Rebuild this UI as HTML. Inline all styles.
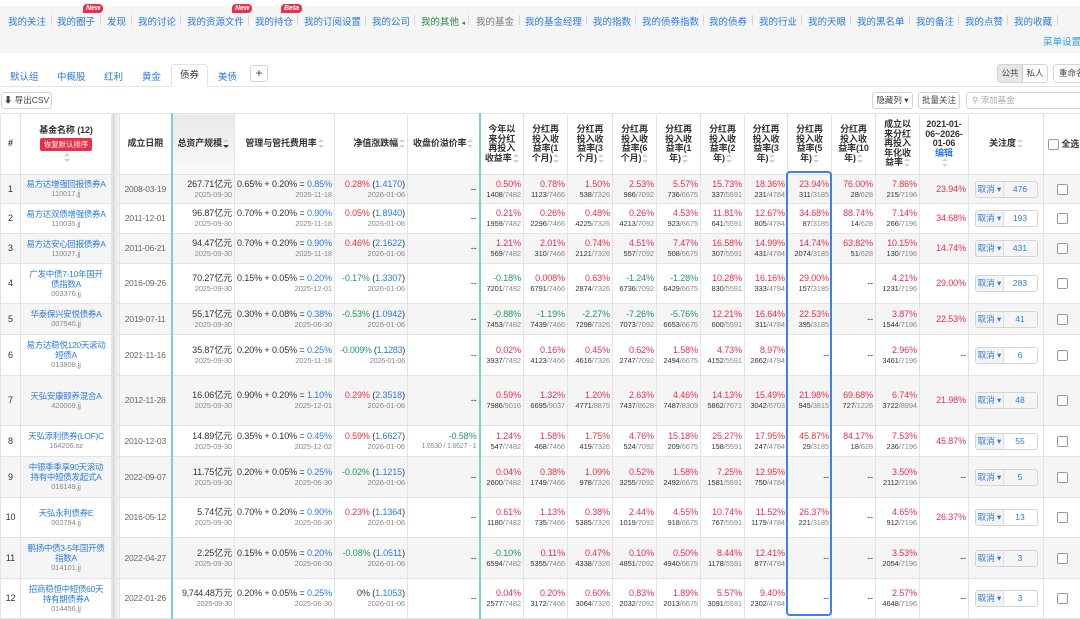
<!DOCTYPE html>
<html><head><meta charset="utf-8">
<style>
*{box-sizing:border-box;margin:0;padding:0}
body{width:1080px;height:617px;overflow:hidden;background:#fff;font-family:"Liberation Sans","Noto Sans CJK SC",sans-serif;color:#333;position:relative}
.nav{position:absolute;left:0;top:6px;width:1080px;height:47px;background:#f5f5f5}
.nav a{position:absolute;top:8px;font-size:9.5px;color:#2a7ae2;text-decoration:none;white-space:nowrap}
.nav .sep{position:absolute;top:9px;width:1px;height:10px;background:#d6d6d6}
.badge{position:absolute;top:-2px;font-size:7px;font-style:italic;font-weight:bold;color:#fff;background:#e8304a;border-radius:4px 4px 4px 0;padding:0 3px;line-height:9px}
.tab{position:absolute;top:69px;font-size:9.5px;color:#2a7ae2}
.tabline{position:absolute;left:0;top:86px;width:1080px;height:1px;background:#e3e3e3}
.btn{position:absolute;border:1px solid #d4d4d4;border-radius:3px;background:#fff;font-size:8.5px;color:#444;text-align:center;white-space:nowrap}
table{position:absolute;left:0;top:113px;border-collapse:collapse;table-layout:fixed;width:1080px}
td{border:1px solid #e3e3e3;font-size:9px;vertical-align:middle;overflow:hidden;white-space:nowrap;padding:0 2px;line-height:11px;letter-spacing:-0.1px}
tr.g td{background:#f5f5f5}
tr.h td{background:#fff;font-weight:bold;text-align:center;line-height:9.5px;font-size:9px;white-space:normal;color:#333}
td.gap{background:linear-gradient(to right,#cfcfcf,#e9e9e9 40%,#f7f7f7)!important;border-left:1px solid #ccc;padding:0}
td.tl{border-left:2px solid #7fcfcf}
td.c{text-align:center}
td.r{text-align:right}
td.dt{font-size:8.5px;color:#666;text-align:center;padding:0;letter-spacing:-0.2px}
td.n{padding:0 1px}
.nm{color:#2a7ae2;font-size:8.5px;line-height:10px;white-space:normal;text-align:center;letter-spacing:-0.3px}
.cd{color:#888;font-size:7.5px;line-height:10px;text-align:center}
.s{display:block;font-size:7.5px;color:#888;line-height:10px}
.s b{color:#333;font-weight:normal}
.v{display:block;line-height:11px}
.red{color:#e8304a}.grn{color:#1e9c5a}.blu{color:#2a7ae2}
.so{display:inline-block;width:6px;height:9px;position:relative;vertical-align:middle;margin-left:1px}
.so:before,.so:after{content:"";position:absolute;left:0;border-left:3px solid transparent;border-right:3px solid transparent}
.so:before{top:0;border-bottom:3.5px solid #d0d0d0}
.so:after{bottom:0;border-top:3.5px solid #d0d0d0}
.so.d:after{border-top-color:#333}
.fb{display:inline-block;width:63px;height:17px;border:1px solid #d4d4d4;border-radius:3px;font-size:8.5px;line-height:15px;vertical-align:middle;overflow:hidden;letter-spacing:0}
.fb span{display:inline-block;height:15px;text-align:center;vertical-align:top}
.fb .a{width:28px;background:#f3f3f3;color:#2a7ae2;border-right:1px solid #ddd}
.fb .b{width:32px;color:#2a7ae2}
.cb{display:inline-block;width:11px;height:11px;border:1px solid #999;border-radius:2px;background:#fff;vertical-align:middle}
.box{position:absolute;left:786px;top:171px;width:46px;height:445px;border:2.5px solid #3b82f0;border-radius:4px}
</style></head><body>
<div class="nav">
<a style="left:8px">我的关注</a><i class="sep" style="left:51px"></i>
<a style="left:57px">我的圈子<span class="badge" style="left:26px;top:-10px">New</span></a><i class="sep" style="left:100px"></i>
<a style="left:107px">发现</a><i class="sep" style="left:131px"></i>
<a style="left:138px">我的讨论</a><i class="sep" style="left:180px"></i>
<a style="left:187px">我的资源文件<span class="badge" style="left:45px;top:-10px">New</span></a><i class="sep" style="left:248px"></i>
<a style="left:255px">我的持仓<span class="badge" style="left:26px;top:-10px">Beta</span></a><i class="sep" style="left:297px"></i>
<a style="left:304px">我的订阅设置</a><i class="sep" style="left:365px"></i>
<a style="left:372px">我的公司</a><i class="sep" style="left:414px"></i>
<a style="left:421px;color:#2a8a4a">我的其他 <span style="font-size:7px">◂</span></a><i class="sep" style="left:468px"></i>
<a style="left:476px;color:#777">我的基金</a><i class="sep" style="left:519px"></i>
<a style="left:525px">我的基金经理</a><i class="sep" style="left:586px"></i>
<a style="left:593px">我的指数</a><i class="sep" style="left:635px"></i>
<a style="left:642px">我的债券指数</a><i class="sep" style="left:703px"></i>
<a style="left:709px">我的债券</a><i class="sep" style="left:752px"></i>
<a style="left:759px">我的行业</a><i class="sep" style="left:801px"></i>
<a style="left:808px">我的天眼</a><i class="sep" style="left:850px"></i>
<a style="left:857px">我的黑名单</a><i class="sep" style="left:909px"></i>
<a style="left:916px">我的备注</a><i class="sep" style="left:958px"></i>
<a style="left:965px">我的点赞</a><i class="sep" style="left:1007px"></i>
<a style="left:1014px">我的收藏</a><i class="sep" style="left:1057px"></i>
<a style="left:1043px;top:28px;color:#2aa0e0">菜单设置</a>
</div>
<div class="tabline"></div>
<span class="tab" style="left:10px">默认组</span>
<span class="tab" style="left:57px">中概股</span>
<span class="tab" style="left:104px">红利</span>
<span class="tab" style="left:142px">黄金</span>
<div style="position:absolute;left:171px;top:64px;width:37px;height:23px;border:1px solid #e3e3e3;border-bottom:1px solid #fff;background:#fff;border-radius:3px 3px 0 0;font-size:9.5px;color:#333;text-align:center;line-height:22px">债券</div>
<span class="tab" style="left:218px">美债</span>
<div class="btn" style="left:250px;top:65px;width:18px;height:17px;font-size:12px;line-height:14px">+</div>
<div class="btn" style="left:997px;top:64px;width:51px;height:19px;line-height:17px;padding:0"><span style="display:inline-block;width:25px;background:#e6e6e6;border-right:1px solid #ccc">公共</span><span style="display:inline-block;width:24px">私人</span></div>
<div class="btn" style="left:1053px;top:64px;width:40px;height:19px;line-height:17px;text-align:left;padding-left:5px">重命名</div>
<div class="btn" style="left:1px;top:92px;width:51px;height:17px;line-height:15px">⬇ 导出CSV</div>
<div class="btn" style="left:872px;top:92px;width:41px;height:17px;line-height:15px">隐藏列 ▾</div>
<div class="btn" style="left:918px;top:92px;width:42px;height:17px;line-height:15px">批量关注</div>
<div class="btn" style="left:966px;top:92px;width:120px;height:17px;line-height:15px;text-align:left;padding-left:5px;color:#aaa">&#9906; 添加基金</div>

<table>
<colgroup><col style="width:20px"><col style="width:91px"><col style="width:8px"><col style="width:52px"><col style="width:63px"><col style="width:100px"><col style="width:73px"><col style="width:72px"><col style="width:44px"><col style="width:44px"><col style="width:45px"><col style="width:44px"><col style="width:44px"><col style="width:44px"><col style="width:43px"><col style="width:44px"><col style="width:44px"><col style="width:44px"><col style="width:49px"><col style="width:75px"><col style="width:37px"></colgroup>
<tr class="h" style="height:61px">
<td>#</td><td>基金名称 (12)<br><span style="display:inline-block;background:#e8304a;color:#fff;font-size:7.5px;font-weight:normal;padding:2px 4px;border-radius:2px;margin:3px 0 2px;line-height:9px">恢复默认排序</span><br><span class="so"></span></td><td class="gap"></td>
<td>成立日期</td><td class="tl" style="background:linear-gradient(#e9e9e9,#fafafa);white-space:nowrap">总资产规模<span class="so d"></span></td><td style="white-space:nowrap">管理与管托费用率<span class="so"></span></td><td style="text-align:right;white-space:nowrap">净值涨跌幅<span class="so"></span></td><td style="white-space:nowrap">收盘价溢价率<span class="so"></span></td>
<td class="tl">今年以<br>来分红<br>再投入<br>收益率<span class="so"></span></td>
<td>分红再<br>投入收<br>益率(1<br>个月)<span class="so"></span></td>
<td>分红再<br>投入收<br>益率(3<br>个月)<span class="so"></span></td>
<td>分红再<br>投入收<br>益率(6<br>个月)<span class="so"></span></td>
<td>分红再<br>投入收<br>益率(1<br>年)<span class="so"></span></td>
<td>分红再<br>投入收<br>益率(2<br>年)<span class="so"></span></td>
<td>分红再<br>投入收<br>益率(3<br>年)<span class="so"></span></td>
<td>分红再<br>投入收<br>益率(5<br>年)<span class="so"></span></td>
<td>分红再<br>投入收<br>益率(10<br>年)<span class="so"></span></td>
<td>成立以<br>来分红<br>再投入<br>年化收<br>益率<span class="so"></span></td>
<td>2021-01-<br>06~2026-<br>01-06<br><span class="blu">编辑</span><br><span class="so"></span></td>
<td>关注度<span class="so"></span></td>
<td style="text-align:left;white-space:nowrap;padding:0"><span class="cb" style="margin-left:4px"></span> 全选</td>
</tr>

<tr class="g" style="height:29px"><td class="c">1</td><td class="n"><div class="nm">易方达增强回报债券A</div><div class="cd">110017.jj</div></td><td class="gap"></td><td class="dt">2008-03-19</td>
<td class="r tl"><span class="v">267.71亿元</span><span class="s">2025-09-30</span></td><td class="r"><span class="v">0.65% + 0.20% = <span class="blu">0.85%</span></span><span class="s">2025-11-18</span></td><td class="r"><span class="v"><span class="red">0.28%</span> (<span class="blu">1.4170</span>)</span><span class="s">2026-01-06</span></td><td class="r">--</td>
<td class="r tl"><span class="v red">0.50%</span><span class="s"><b>1408</b>/7482</span></td><td class="r"><span class="v red">0.78%</span><span class="s"><b>1123</b>/7466</span></td><td class="r"><span class="v red">1.50%</span><span class="s"><b>538</b>/7326</span></td><td class="r"><span class="v red">2.53%</span><span class="s"><b>986</b>/7092</span></td><td class="r"><span class="v red">5.57%</span><span class="s"><b>736</b>/6675</span></td><td class="r"><span class="v red">15.73%</span><span class="s"><b>337</b>/5591</span></td><td class="r"><span class="v red">18.36%</span><span class="s"><b>231</b>/4784</span></td><td class="r"><span class="v red">23.94%</span><span class="s"><b>311</b>/3185</span></td><td class="r"><span class="v red">76.00%</span><span class="s"><b>28</b>/628</span></td><td class="r"><span class="v red">7.86%</span><span class="s"><b>215</b>/7196</span></td><td class="r red">23.94%</td><td class="c"><span class="fb"><span class="a">取消 ▾</span><span class="b">476</span></span></td><td class="c"><span class="cb"></span></td></tr>

<tr style="height:30px"><td class="c">2</td><td class="n"><div class="nm">易方达双债增强债券A</div><div class="cd">110035.jj</div></td><td class="gap"></td><td class="dt">2011-12-01</td>
<td class="r tl"><span class="v">96.87亿元</span><span class="s">2025-09-30</span></td><td class="r"><span class="v">0.70% + 0.20% = <span class="blu">0.90%</span></span><span class="s">2025-11-18</span></td><td class="r"><span class="v"><span class="red">0.05%</span> (<span class="blu">1.8940</span>)</span><span class="s">2026-01-06</span></td><td class="r">--</td>
<td class="r tl"><span class="v red">0.21%</span><span class="s"><b>1959</b>/7482</span></td><td class="r"><span class="v red">0.26%</span><span class="s"><b>2296</b>/7466</span></td><td class="r"><span class="v red">0.48%</span><span class="s"><b>4225</b>/7326</span></td><td class="r"><span class="v red">0.26%</span><span class="s"><b>4213</b>/7092</span></td><td class="r"><span class="v red">4.53%</span><span class="s"><b>923</b>/6675</span></td><td class="r"><span class="v red">11.81%</span><span class="s"><b>641</b>/5591</span></td><td class="r"><span class="v red">12.67%</span><span class="s"><b>805</b>/4784</span></td><td class="r"><span class="v red">34.68%</span><span class="s"><b>87</b>/3185</span></td><td class="r"><span class="v red">88.74%</span><span class="s"><b>14</b>/628</span></td><td class="r"><span class="v red">7.14%</span><span class="s"><b>266</b>/7196</span></td><td class="r red">34.68%</td><td class="c"><span class="fb"><span class="a">取消 ▾</span><span class="b">193</span></span></td><td class="c"><span class="cb"></span></td></tr>

<tr class="g" style="height:30px"><td class="c">3</td><td class="n"><div class="nm">易方达安心回报债券A</div><div class="cd">110027.jj</div></td><td class="gap"></td><td class="dt">2011-06-21</td>
<td class="r tl"><span class="v">94.47亿元</span><span class="s">2025-09-30</span></td><td class="r"><span class="v">0.70% + 0.20% = <span class="blu">0.90%</span></span><span class="s">2025-11-18</span></td><td class="r"><span class="v"><span class="red">0.46%</span> (<span class="blu">2.1622</span>)</span><span class="s">2026-01-06</span></td><td class="r">--</td>
<td class="r tl"><span class="v red">1.21%</span><span class="s"><b>569</b>/7482</span></td><td class="r"><span class="v red">2.01%</span><span class="s"><b>310</b>/7466</span></td><td class="r"><span class="v red">0.74%</span><span class="s"><b>2121</b>/7326</span></td><td class="r"><span class="v red">4.51%</span><span class="s"><b>557</b>/7092</span></td><td class="r"><span class="v red">7.47%</span><span class="s"><b>508</b>/6675</span></td><td class="r"><span class="v red">16.58%</span><span class="s"><b>307</b>/5591</span></td><td class="r"><span class="v red">14.99%</span><span class="s"><b>431</b>/4784</span></td><td class="r"><span class="v red">14.74%</span><span class="s"><b>2074</b>/3185</span></td><td class="r"><span class="v red">63.82%</span><span class="s"><b>51</b>/628</span></td><td class="r"><span class="v red">10.15%</span><span class="s"><b>130</b>/7196</span></td><td class="r red">14.74%</td><td class="c"><span class="fb"><span class="a">取消 ▾</span><span class="b">431</span></span></td><td class="c"><span class="cb"></span></td></tr>

<tr style="height:40px"><td class="c">4</td><td class="n"><div class="nm">广发中债7-10年国开<br>债指数A</div><div class="cd">003376.jj</div></td><td class="gap"></td><td class="dt">2016-09-26</td>
<td class="r tl"><span class="v">70.27亿元</span><span class="s">2025-09-30</span></td><td class="r"><span class="v">0.15% + 0.05% = <span class="blu">0.20%</span></span><span class="s">2025-12-01</span></td><td class="r"><span class="v"><span class="grn">-0.17%</span> (<span class="blu">1.3307</span>)</span><span class="s">2026-01-06</span></td><td class="r">--</td>
<td class="r tl"><span class="v grn">-0.18%</span><span class="s"><b>7201</b>/7482</span></td><td class="r"><span class="v red">0.008%</span><span class="s"><b>6791</b>/7466</span></td><td class="r"><span class="v red">0.63%</span><span class="s"><b>2874</b>/7326</span></td><td class="r"><span class="v grn">-1.24%</span><span class="s"><b>6736</b>/7092</span></td><td class="r"><span class="v grn">-1.28%</span><span class="s"><b>6429</b>/6675</span></td><td class="r"><span class="v red">10.28%</span><span class="s"><b>830</b>/5591</span></td><td class="r"><span class="v red">16.16%</span><span class="s"><b>333</b>/4784</span></td><td class="r"><span class="v red">29.00%</span><span class="s"><b>157</b>/3185</span></td><td class="r">--</td><td class="r"><span class="v red">4.21%</span><span class="s"><b>1231</b>/7196</span></td><td class="r red">29.00%</td><td class="c"><span class="fb"><span class="a">取消 ▾</span><span class="b">283</span></span></td><td class="c"><span class="cb"></span></td></tr>

<tr class="g" style="height:31px"><td class="c">5</td><td class="n"><div class="nm">华泰保兴安悦债券A</div><div class="cd">007540.jj</div></td><td class="gap"></td><td class="dt">2019-07-11</td>
<td class="r tl"><span class="v">55.17亿元</span><span class="s">2025-09-30</span></td><td class="r"><span class="v">0.30% + 0.08% = <span class="blu">0.38%</span></span><span class="s">2025-06-30</span></td><td class="r"><span class="v"><span class="grn">-0.53%</span> (<span class="blu">1.0942</span>)</span><span class="s">2026-01-06</span></td><td class="r">--</td>
<td class="r tl"><span class="v grn">-0.88%</span><span class="s"><b>7453</b>/7482</span></td><td class="r"><span class="v grn">-1.19%</span><span class="s"><b>7439</b>/7466</span></td><td class="r"><span class="v grn">-2.27%</span><span class="s"><b>7298</b>/7326</span></td><td class="r"><span class="v grn">-7.26%</span><span class="s"><b>7073</b>/7092</span></td><td class="r"><span class="v grn">-5.76%</span><span class="s"><b>6653</b>/6675</span></td><td class="r"><span class="v red">12.21%</span><span class="s"><b>600</b>/5591</span></td><td class="r"><span class="v red">16.64%</span><span class="s"><b>311</b>/4784</span></td><td class="r"><span class="v red">22.53%</span><span class="s"><b>395</b>/3185</span></td><td class="r">--</td><td class="r"><span class="v red">3.87%</span><span class="s"><b>1544</b>/7196</span></td><td class="r red">22.53%</td><td class="c"><span class="fb"><span class="a">取消 ▾</span><span class="b">41</span></span></td><td class="c"><span class="cb"></span></td></tr>

<tr style="height:41px"><td class="c">6</td><td class="n"><div class="nm">易方达稳悦120天滚动<br>短债A</div><div class="cd">013808.jj</div></td><td class="gap"></td><td class="dt">2021-11-16</td>
<td class="r tl"><span class="v">35.87亿元</span><span class="s">2025-09-30</span></td><td class="r"><span class="v">0.20% + 0.05% = <span class="blu">0.25%</span></span><span class="s">2025-11-18</span></td><td class="r" style="letter-spacing:-0.3px"><span class="v"><span class="grn">-0.009%</span> (<span class="blu">1.1283</span>)</span><span class="s">2026-01-06</span></td><td class="r">--</td>
<td class="r tl"><span class="v red">0.02%</span><span class="s"><b>3937</b>/7482</span></td><td class="r"><span class="v red">0.16%</span><span class="s"><b>4123</b>/7466</span></td><td class="r"><span class="v red">0.45%</span><span class="s"><b>4616</b>/7326</span></td><td class="r"><span class="v red">0.62%</span><span class="s"><b>2747</b>/7092</span></td><td class="r"><span class="v red">1.58%</span><span class="s"><b>2494</b>/6675</span></td><td class="r"><span class="v red">4.73%</span><span class="s"><b>4152</b>/5591</span></td><td class="r"><span class="v red">8.97%</span><span class="s"><b>2662</b>/4784</span></td><td class="r">--</td><td class="r">--</td><td class="r"><span class="v red">2.96%</span><span class="s"><b>3461</b>/7196</span></td><td class="r">--</td><td class="c"><span class="fb"><span class="a">取消 ▾</span><span class="b">6</span></span></td><td class="c"><span class="cb"></span></td></tr>

<tr class="g" style="height:50px"><td class="c">7</td><td class="n"><div class="nm">天弘安康颐养混合A</div><div class="cd">420009.jj</div></td><td class="gap"></td><td class="dt">2012-11-28</td>
<td class="r tl"><span class="v">16.06亿元</span><span class="s">2025-09-30</span></td><td class="r"><span class="v">0.90% + 0.20% = <span class="blu">1.10%</span></span><span class="s">2025-12-01</span></td><td class="r"><span class="v"><span class="red">0.29%</span> (<span class="blu">2.3518</span>)</span><span class="s">2026-01-06</span></td><td class="r">--</td>
<td class="r tl"><span class="v red">0.59%</span><span class="s"><b>7986</b>/9016</span></td><td class="r"><span class="v red">1.32%</span><span class="s"><b>6695</b>/9037</span></td><td class="r"><span class="v red">1.20%</span><span class="s"><b>4771</b>/8875</span></td><td class="r"><span class="v red">2.63%</span><span class="s"><b>7437</b>/8628</span></td><td class="r"><span class="v red">4.46%</span><span class="s"><b>7487</b>/8309</span></td><td class="r"><span class="v red">14.13%</span><span class="s"><b>5862</b>/7671</span></td><td class="r"><span class="v red">15.49%</span><span class="s"><b>3042</b>/6703</span></td><td class="r"><span class="v red">21.98%</span><span class="s"><b>945</b>/3815</span></td><td class="r"><span class="v red">69.68%</span><span class="s"><b>727</b>/1226</span></td><td class="r"><span class="v red">6.74%</span><span class="s"><b>3722</b>/8994</span></td><td class="r red">21.98%</td><td class="c"><span class="fb"><span class="a">取消 ▾</span><span class="b">48</span></span></td><td class="c"><span class="cb"></span></td></tr>

<tr style="height:31px"><td class="c">8</td><td class="n"><div class="nm">天弘添利债券(LOF)C</div><div class="cd">164206.sz</div></td><td class="gap"></td><td class="dt">2010-12-03</td>
<td class="r tl"><span class="v">14.89亿元</span><span class="s">2025-09-30</span></td><td class="r"><span class="v">0.35% + 0.10% = <span class="blu">0.45%</span></span><span class="s">2025-12-02</span></td><td class="r"><span class="v"><span class="red">0.59%</span> (<span class="blu">1.6627</span>)</span><span class="s">2026-01-06</span></td><td class="r"><span class="v grn">-0.58%</span><span class="s" style="font-size:7px;letter-spacing:-0.2px">1.6530 / 1.6627 - 1</span></td>
<td class="r tl"><span class="v red">1.24%</span><span class="s"><b>547</b>/7482</span></td><td class="r"><span class="v red">1.58%</span><span class="s"><b>468</b>/7466</span></td><td class="r"><span class="v red">1.75%</span><span class="s"><b>419</b>/7326</span></td><td class="r"><span class="v red">4.76%</span><span class="s"><b>524</b>/7092</span></td><td class="r"><span class="v red">15.18%</span><span class="s"><b>209</b>/6675</span></td><td class="r"><span class="v red">25.27%</span><span class="s"><b>158</b>/5591</span></td><td class="r"><span class="v red">17.95%</span><span class="s"><b>247</b>/4784</span></td><td class="r"><span class="v red">45.87%</span><span class="s"><b>29</b>/3185</span></td><td class="r"><span class="v red">84.17%</span><span class="s"><b>18</b>/628</span></td><td class="r"><span class="v red">7.53%</span><span class="s"><b>236</b>/7196</span></td><td class="r red">45.87%</td><td class="c"><span class="fb"><span class="a">取消 ▾</span><span class="b">55</span></span></td><td class="c"><span class="cb"></span></td></tr>

<tr class="g" style="height:41px"><td class="c">9</td><td class="n"><div class="nm">中银季季享90天滚动<br>持有中短债发起式A</div><div class="cd">016149.jj</div></td><td class="gap"></td><td class="dt">2022-09-07</td>
<td class="r tl"><span class="v">11.75亿元</span><span class="s">2025-09-30</span></td><td class="r"><span class="v">0.20% + 0.05% = <span class="blu">0.25%</span></span><span class="s">2025-06-30</span></td><td class="r"><span class="v"><span class="grn">-0.02%</span> (<span class="blu">1.1215</span>)</span><span class="s">2026-01-06</span></td><td class="r">--</td>
<td class="r tl"><span class="v red">0.04%</span><span class="s"><b>2600</b>/7482</span></td><td class="r"><span class="v red">0.38%</span><span class="s"><b>1749</b>/7466</span></td><td class="r"><span class="v red">1.09%</span><span class="s"><b>978</b>/7326</span></td><td class="r"><span class="v red">0.52%</span><span class="s"><b>3255</b>/7092</span></td><td class="r"><span class="v red">1.58%</span><span class="s"><b>2492</b>/6675</span></td><td class="r"><span class="v red">7.25%</span><span class="s"><b>1581</b>/5591</span></td><td class="r"><span class="v red">12.95%</span><span class="s"><b>750</b>/4784</span></td><td class="r">--</td><td class="r">--</td><td class="r"><span class="v red">3.50%</span><span class="s"><b>2112</b>/7196</span></td><td class="r">--</td><td class="c"><span class="fb"><span class="a">取消 ▾</span><span class="b">5</span></span></td><td class="c"><span class="cb"></span></td></tr>

<tr style="height:40px"><td class="c">10</td><td class="n"><div class="nm">天弘永利债券E</div><div class="cd">002794.jj</div></td><td class="gap"></td><td class="dt">2016-05-12</td>
<td class="r tl"><span class="v">5.74亿元</span><span class="s">2025-09-30</span></td><td class="r"><span class="v">0.70% + 0.20% = <span class="blu">0.90%</span></span><span class="s">2025-06-30</span></td><td class="r"><span class="v"><span class="red">0.23%</span> (<span class="blu">1.1364</span>)</span><span class="s">2026-01-06</span></td><td class="r">--</td>
<td class="r tl"><span class="v red">0.61%</span><span class="s"><b>1180</b>/7482</span></td><td class="r"><span class="v red">1.13%</span><span class="s"><b>735</b>/7466</span></td><td class="r"><span class="v red">0.38%</span><span class="s"><b>5385</b>/7326</span></td><td class="r"><span class="v red">2.44%</span><span class="s"><b>1019</b>/7092</span></td><td class="r"><span class="v red">4.55%</span><span class="s"><b>918</b>/6675</span></td><td class="r"><span class="v red">10.74%</span><span class="s"><b>767</b>/5591</span></td><td class="r"><span class="v red">11.52%</span><span class="s"><b>1179</b>/4784</span></td><td class="r"><span class="v red">26.37%</span><span class="s"><b>221</b>/3185</span></td><td class="r">--</td><td class="r"><span class="v red">4.65%</span><span class="s"><b>912</b>/7196</span></td><td class="r red">26.37%</td><td class="c"><span class="fb"><span class="a">取消 ▾</span><span class="b">13</span></span></td><td class="c"><span class="cb"></span></td></tr>

<tr class="g" style="height:41px"><td class="c">11</td><td class="n"><div class="nm">鹏扬中债3-5年国开债<br>指数A</div><div class="cd">014101.jj</div></td><td class="gap"></td><td class="dt">2022-04-27</td>
<td class="r tl"><span class="v">2.25亿元</span><span class="s">2025-09-30</span></td><td class="r"><span class="v">0.15% + 0.05% = <span class="blu">0.20%</span></span><span class="s">2025-06-30</span></td><td class="r"><span class="v"><span class="grn">-0.08%</span> (<span class="blu">1.0511</span>)</span><span class="s">2026-01-06</span></td><td class="r">--</td>
<td class="r tl"><span class="v grn">-0.10%</span><span class="s"><b>6594</b>/7482</span></td><td class="r"><span class="v red">0.11%</span><span class="s"><b>5355</b>/7466</span></td><td class="r"><span class="v red">0.47%</span><span class="s"><b>4338</b>/7326</span></td><td class="r"><span class="v red">0.10%</span><span class="s"><b>4851</b>/7092</span></td><td class="r"><span class="v red">0.50%</span><span class="s"><b>4940</b>/6675</span></td><td class="r"><span class="v red">8.44%</span><span class="s"><b>1178</b>/5591</span></td><td class="r"><span class="v red">12.41%</span><span class="s"><b>877</b>/4784</span></td><td class="r">--</td><td class="r">--</td><td class="r"><span class="v red">3.53%</span><span class="s"><b>2054</b>/7196</span></td><td class="r">--</td><td class="c"><span class="fb"><span class="a">取消 ▾</span><span class="b">3</span></span></td><td class="c"><span class="cb"></span></td></tr>

<tr style="height:40px"><td class="c">12</td><td class="n"><div class="nm">招商稳恒中短债60天<br>持有期债券A</div><div class="cd">014456.jj</div></td><td class="gap"></td><td class="dt">2022-01-26</td>
<td class="r tl" style="letter-spacing:-0.3px"><span class="v">9,744.48万元</span><span class="s">2025-09-30</span></td><td class="r"><span class="v">0.20% + 0.05% = <span class="blu">0.25%</span></span><span class="s">2025-06-30</span></td><td class="r"><span class="v">0% (<span class="blu">1.1053</span>)</span><span class="s">2026-01-06</span></td><td class="r">--</td>
<td class="r tl"><span class="v red">0.04%</span><span class="s"><b>2577</b>/7482</span></td><td class="r"><span class="v red">0.20%</span><span class="s"><b>3172</b>/7466</span></td><td class="r"><span class="v red">0.60%</span><span class="s"><b>3064</b>/7326</span></td><td class="r"><span class="v red">0.83%</span><span class="s"><b>2032</b>/7092</span></td><td class="r"><span class="v red">1.89%</span><span class="s"><b>2013</b>/6675</span></td><td class="r"><span class="v red">5.57%</span><span class="s"><b>3091</b>/5591</span></td><td class="r"><span class="v red">9.40%</span><span class="s"><b>2302</b>/4784</span></td><td class="r">--</td><td class="r">--</td><td class="r"><span class="v red">2.57%</span><span class="s"><b>4648</b>/7196</span></td><td class="r">--</td><td class="c"><span class="fb"><span class="a">取消 ▾</span><span class="b">3</span></span></td><td class="c"><span class="cb"></span></td></tr>
</table>
<div class="box"></div>
</body></html>
